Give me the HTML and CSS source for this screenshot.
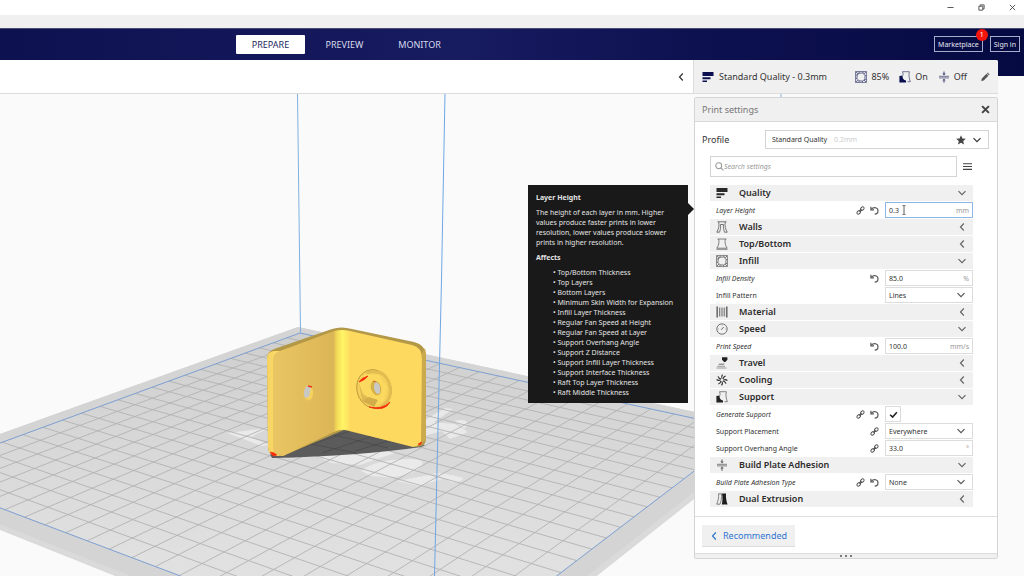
FILE: index.html
```html
<!DOCTYPE html>
<html lang="en">
<head>
<meta charset="utf-8">
<title>Print preparation</title>
<link rel="stylesheet" href="styles.css">
</head>
<body>
<svg class="symbols" aria-hidden="true">
  <symbol id="i-down" viewBox="0 0 10 10"><path d="M1.5 3.2 5 6.7 8.5 3.2" fill="none" stroke="currentColor" stroke-width="1.2"/></symbol>
  <symbol id="i-left" viewBox="0 0 10 10"><path d="M6.8 1.5 3.5 5 6.8 8.5" fill="none" stroke="currentColor" stroke-width="1.2"/></symbol>
  <symbol id="i-link" viewBox="0 0 10 10"><g fill="none" stroke="currentColor" stroke-width="1.1"><ellipse cx="3" cy="7" rx="2.3" ry="1.6" transform="rotate(-45 3 7)"/><ellipse cx="7" cy="3" rx="2.3" ry="1.6" transform="rotate(-45 7 3)"/><path d="M3.6 6.4 6.4 3.6"/></g></symbol>
  <symbol id="i-undo" viewBox="0 0 10 10"><path d="M1.500 3.600C4 .6 8.900 1.500 8.900 5.300 8.900 7.600 7.300 9 5.200 9" fill="none" stroke="currentColor" stroke-width="1.300"/><path d="M1 .9V4.300H4.400" fill="none" stroke="currentColor" stroke-width="1.300"/></symbol>
  <symbol id="i-quality" viewBox="0 0 12 12"><path d="M.5 1h11v4H.5zM.5 6.2h8v2H.5zM.5 9.6h4.5v1.3H.5z" fill="currentColor"/></symbol>
  <symbol id="i-walls" viewBox="0 0 12 12"><path d="M1.500.800h9M2.700.800C3.500 5 2.500 8 .800 11.200h2.700C4.500 8.500 4.800 6 4.500 3.500h3C7.200 6 7.500 8.500 8.500 11.200h2.700C9.500 8 8.500 5 9.300.800" fill="none" stroke="currentColor" stroke-width=".9"/></symbol>
  <symbol id="i-top" viewBox="0 0 12 12"><path d="M1.500 1h9M2.700 1c.8 4-.2 6.500-1.900 9.200h10.400C9.500 7.500 8.500 5 9.300 1M.5 11.300h11" fill="none" stroke="currentColor" stroke-width=".8"/></symbol>
  <symbol id="i-infill" viewBox="0 0 12 12"><g fill="none" stroke="currentColor" stroke-width=".8"><path d="M.6.6h10.800v10.800H.6z"/><path d="M4 2.200 8 2l2 2.500-.2 4L7.500 10 4 9.800 2 7.500 2.200 4zM.6 4H2.200L4 2.200V.6M8 .6V2M11.400 4.500H10M9.800 8.500h1.600M7.500 10v1.400M4 9.800v1.600M2 7.500H.6M.6.6 3 3M11.400.6 9 3M.6 11.400 3 9M11.400 11.400 9 9"/></g></symbol>
  <symbol id="i-material" viewBox="0 0 12 12"><path d="M1.200.5v11M10.800.5v11" stroke="currentColor" stroke-width="1.500"/><path d="M3.500 1.500v9M5.200 1.500v9M6.900 1.500v9M8.600 1.500v9" stroke="currentColor" stroke-width=".8"/></symbol>
  <symbol id="i-speed" viewBox="0 0 12 12"><circle cx="6" cy="6" r="5.200" fill="none" stroke="currentColor" stroke-width=".9"/><path d="M5.200 6.800 7.800 4" stroke="currentColor"/><path d="M6 1.800v.8M1.900 6h.8M9.300 6h.8" stroke="currentColor" stroke-width=".6"/></symbol>
  <symbol id="i-travel" viewBox="0 0 12 12"><path d="M6 .3h5.400v2.500L9.300 5H8.100L6 2.800z" fill="#222"/><path d="M3 6.500h6L7.500 8H2.500zM1.500 8.700h7.500v1H1zM.5 10.500h10v1H.5z" fill="#999"/></symbol>
  <symbol id="i-cooling" viewBox="0 0 12 12"><g fill="none" stroke="currentColor" stroke-width="1.100"><path d="M6 4.600Q5 2.500 6.500.6M7 5Q7.300 2.800 9.600 2M7.400 6Q9.500 5 11.400 6.500M7 7Q9.200 7.300 10 9.600M6 7.400Q7 9.500 5.500 11.400M5 7Q4.700 9.200 2.400 10M4.600 6Q2.500 7 .6 5.500M5 5Q2.800 4.700 2 2.400"/></g></symbol>
  <symbol id="i-support" viewBox="0 0 12 12"><path d="M.4 5 3.500 4.500C3.500 7.500 4.500 9 7 9.500v2.100H.4z" fill="var(--solid, #222)"/><path d="M3.500.7h6.800c-.7 3.300-.2 6.500 1 10H8.500M3.500.7c.8 2 .6 3 .3 4" fill="none" stroke="currentColor" stroke-width=".8"/></symbol>
  <symbol id="i-adhesion" viewBox="0 0 12 12"><path d="M1 5.300h10M1 6.900h10" stroke="currentColor" stroke-width=".8"/><path d="M6 .5v3M6 8.700v3" stroke="currentColor" stroke-width="1.100"/><path d="M4.300 2.600h3.400L6 4.600zM4.300 9.600h3.400L6 7.600z" fill="currentColor"/></symbol>
  <symbol id="i-dual" viewBox="0 0 12 12"><path d="M5.500.8H2.600C3 4.500 2 8 .8 11.200h3.200C5.300 8 5.700 4.500 5.500.8z" fill="none" stroke="currentColor" stroke-width=".8"/><path d="M6 .5h4C9.700 5 10.500 8.500 11.600 11.600H5.800C6.700 8 6.700 4 6 .5z" fill="#1c1c1c"/></symbol>
</svg>

<div class="app">
  <svg class="scene" viewBox="0 0 1024 576" preserveAspectRatio="xMinYMin slice" role="img" aria-label="Yellow bracket on the build plate">
    <defs>
      <linearGradient id="bed" x1="0" y1="0" x2="0" y2="1"><stop offset="0" stop-color="#cfcfcf"/><stop offset=".65" stop-color="#e0e0e0"/><stop offset="1" stop-color="#e4e4e4"/></linearGradient>
      <linearGradient id="leftface" x1="0" x2="1"><stop offset="0" stop-color="#eac563"/><stop offset="1" stop-color="#dcb656"/></linearGradient>
      <linearGradient id="bend" x1="0" x2="1"><stop offset="0" stop-color="#e3bf52"/><stop offset=".2" stop-color="#f3dc59"/><stop offset=".55" stop-color="#fff565"/><stop offset="1" stop-color="#ffdc60"/></linearGradient>
      <linearGradient id="leftedge" x1="0" x2="1"><stop offset="0" stop-color="#f5d263"/><stop offset="1" stop-color="#ffe06a"/></linearGradient>
    </defs>
    <path d="M298 327 L-120 477 V482 L435 704 L770 439 V428z" fill="#dadada"/>
    <path d="M298 327 L-120 477 L435 696 L770 432 V428z" fill="#d4d4d4"/>
    <path d="M300 333 L-87 475 L432 671 L748 430z" fill="url(#bed)"/>
    <g fill="#f0f0f0" opacity=".75">
      <path d="M227 433l42-5-18 9 18 8-7 1z"/>
      <path d="M318 457l62-7 18 2-38 13-28-2z"/>
      <path d="M361 471q14-12 50-12 20 1 6 11-16 10-46 6z"/>
      <path d="M397 481l32-6 14 4-24 7z"/>
      <path d="M425 420l20-12 8 1-19 13 21 2 13 8-18 7-8-8-18 5z"/>
      <path d="M455 421q12-3 13 4l-4 4M432 473q14 0 31 5-1 5-12 4z"/>
    </g>
    <g id="grid" stroke="#b2b2b2" stroke-width=".9"></g>
    <path d="M300 333 L-87 475 L432 671 L748 430z" fill="none" stroke="#7d9fd2"/>
    <path d="M297.500 93 L300.500 333M781 93v5" stroke="#80afdf" fill="none"/>
    <path d="M270 454 344 428 425 445 421 447 Q360 456 272 458z" fill="#5b5b5b"/>
    <g stroke="#484848" stroke-width=".7"><path d="M290 452l66-23M322 453l54-18M355 451l43-13M306 443l50 10M330 434l58 14"/></g>
    <path d="M267 358Q267 352 274 349L332 329Q341 326 352 329L414 342Q426 345 426 357V440Q425 447 416 447L344 430 283 456Q268 457 268 447z" fill="#b39847"/>
    <path d="M267 358Q267 352 274 351L281 351 279 456Q268 456 268 447z" fill="url(#leftedge)"/>
    <path d="M273 360Q273 353 280 351L334 331V432L283 456Q273 456 273 448z" fill="url(#leftface)"/>
    <path d="M334 331Q342 329 350 331V431Q342 428 334 432z" fill="url(#bend)"/>
    <path d="M350 331L412 345Q422 347 422 359V437Q421 446 413 447L350 431z" fill="#fdd95f"/>
    <path d="M422 353l3-5q1 4 1 9v83l-5 4z" fill="#cba94d"/>
    <ellipse cx="308" cy="393" rx="5" ry="8" fill="#e8c25a"/>
    <ellipse cx="309" cy="393" rx="4" ry="7" fill="#f5d35e"/>
    <path d="M304 391q2-6 5-5l2 1-2 10-4 1q-2-3-1-7z" fill="#c8c8c4"/>
    <path d="M308 386l4 1" stroke="#f03512" stroke-width="1.500"/>
    <ellipse cx="374" cy="389" rx="17" ry="19.500" transform="rotate(-18 374 389)" fill="#f5d15b" stroke="#b18e38" stroke-width=".8"/>
    <path d="M366 373q18-5 23 10t-8 24" fill="none" stroke="#e2bd51" stroke-width="3"/>
    <path d="M359 383l7-9 13 1 8 12-3 14-9 5-13-6z" fill="#fbd95f"/>
    <path d="M359 383l4 11 6 4-7 3z" fill="#dfba51"/><path d="M362 401l7-4 9 3-4 7z" fill="#d2ad49"/>
    <ellipse cx="376" cy="388" rx="5" ry="7.500" transform="rotate(-18 376 388)" fill="#d5b047"/>
    <path d="M375 382q6 0 5 11l-3 1q-5-5-2-12z" fill="#c9c9c8"/>
    <path d="M359 382q2-4 9-6-3 4-9 6zM369 407q13 3 21-5-5 10-21 5z" fill="#f52a0b" stroke="#f52a0b" stroke-width=".8"/>
    <path d="M373 381l3 1M270 452q4 0 7 3l-4 1zM418 444l4-2-2 3z" fill="#f52a0b" stroke="#f52a0b" stroke-width=".6"/>
    <path d="M445 93 L441.500 280 L434.500 576" stroke="#6fa7e3" fill="none"/>
  </svg>

  <div class="titlebar">
    <button class="win" aria-label="Minimize"><svg viewBox="0 0 8 8"><path d="M.5 4h7" stroke="#444"/></svg></button>
    <button class="win" aria-label="Restore"><svg viewBox="0 0 8 8"><path d="M1 2.500h4.500V7H1zM2.500 2.500V1H7v4.500H5.500" fill="none" stroke="#444"/></svg></button>
    <button class="win" aria-label="Close"><svg viewBox="0 0 8 8"><path d="M1 1l6 6M7 1 1 7" stroke="#444"/></svg></button>
  </div>
  <div class="menubar"></div>

  <header class="header">
    <nav class="stages">
      <a class="stage stage-on" href="#prepare">PREPARE</a>
      <a class="stage" href="#preview">PREVIEW</a>
      <a class="stage" href="#monitor">MONITOR</a>
    </nav>
    <div class="account">
      <button class="outline">Marketplace<span class="badge">1</span></button>
      <button class="outline">Sign in</button>
    </div>
  </header>

  <div class="toolbar">
    <div class="toolbar-left"><button class="plain" aria-label="Collapse"><svg class="ico10"><use href="#i-left"/></svg></button></div>
    <div class="summary">
      <svg class="ico12 navy"><use href="#i-quality"/></svg>
      <span class="summary-name">Standard Quality - 0.3mm</span>
      <span class="stat"><svg class="ico12"><use href="#i-infill"/></svg>85%</span>
      <span class="stat"><svg class="ico12"><use href="#i-support"/></svg>On</span>
      <span class="stat"><svg class="ico12"><use href="#i-adhesion"/></svg>Off</span>
      <button class="plain" aria-label="Edit"><svg class="ico10" viewBox="0 0 10 10"><path d="M1.200 9l.6-2.500L6.500 1.800l1.900 1.900L3.700 8.400zM7 1.300l.8-.7 1.800 1.800-.8.8z" fill="#555"/></svg></button>
    </div>
  </div>

  <section class="panel">
    <aside class="tooltip">
      <h3>Layer Height</h3>
      <p>The height of each layer in mm. Higher values produce faster prints in lower resolution, lower values produce slower prints in higher resolution.</p>
      <h3>Affects</h3>
      <ul>
        <li>Top/Bottom Thickness</li><li>Top Layers</li><li>Bottom Layers</li><li>Minimum Skin Width for Expansion</li><li>Infill Layer Thickness</li><li>Regular Fan Speed at Height</li><li>Regular Fan Speed at Layer</li><li>Support Overhang Angle</li><li>Support Z Distance</li><li>Support Infill Layer Thickness</li><li>Support Interface Thickness</li><li>Raft Top Layer Thickness</li><li>Raft Middle Thickness</li>
      </ul>
    </aside>
    <div class="panel-head">
      <h2>Print settings</h2>
      <button class="plain" aria-label="Close settings"><svg class="ico8" viewBox="0 0 8 8"><path d="M1 1l6 6M7 1 1 7" stroke="#444" stroke-width="1.800"/></svg></button>
    </div>
    <div class="profile">
      <label for="profile">Profile</label>
      <div class="profile-box">
        <select id="profile"><option>Standard Quality</option></select>
        <span class="hint">0.2mm</span>
        <svg class="ico10" viewBox="0 0 10 10"><path d="M5 .3 6.400 3.500 9.900 3.800 7.200 6.100 8 9.600 5 7.700 2 9.600 2.800 6.100.1 3.800 3.600 3.500z" fill="#444"/></svg>
        <svg class="ico10"><use href="#i-down"/></svg>
      </div>
    </div>
    <div class="search">
      <div class="search-box">
        <svg class="ico8" viewBox="0 0 8 8"><circle cx="3.300" cy="3.300" r="2.600" fill="none" stroke="#999" stroke-width=".9"/><path d="M5.200 5.200 7.500 7.500" stroke="#999"/></svg>
        <input type="text" placeholder="Search settings" aria-label="Search settings">
      </div>
      <button class="plain" aria-label="Setting visibility"><svg class="ico8" viewBox="0 0 8 8"><path d="M0 1.500h8M0 4h8M0 6.500h8" stroke="#444"/></svg></button>
    </div>

    <div class="list">
      <button class="cat"><svg class="ico12 dark"><use href="#i-quality"/></svg><span>Quality</span><svg class="ico10"><use href="#i-down"/></svg></button>
      <div class="row"><label class="changed" for="lh">Layer Height</label><svg class="ico8"><use href="#i-link"/></svg><svg class="ico8"><use href="#i-undo"/></svg><div class="field focus"><input id="lh" type="text" value="0.3"><span>mm</span><svg class="ibeam" viewBox="0 0 4 10"><path d="M.5.500h1l.5.500.5-.5h1M2 1v8M.5 9.500h1L2 9l.5.500h1" fill="none" stroke="#333" stroke-width=".8"/></svg></div></div>
      <button class="cat"><svg class="ico12"><use href="#i-walls"/></svg><span>Walls</span><svg class="ico10"><use href="#i-left"/></svg></button>
      <button class="cat"><svg class="ico12"><use href="#i-top"/></svg><span>Top/Bottom</span><svg class="ico10"><use href="#i-left"/></svg></button>
      <button class="cat"><svg class="ico12"><use href="#i-infill"/></svg><span>Infill</span><svg class="ico10"><use href="#i-down"/></svg></button>
      <div class="row"><label class="changed" for="dens">Infill Density</label><svg class="ico8"><use href="#i-undo"/></svg><div class="field"><input id="dens" type="text" value="85.0"><span>%</span></div></div>
      <div class="row"><label for="pat">Infill Pattern</label><div class="field"><select id="pat"><option>Lines</option></select><svg class="ico10"><use href="#i-down"/></svg></div></div>
      <button class="cat"><svg class="ico12"><use href="#i-material"/></svg><span>Material</span><svg class="ico10"><use href="#i-left"/></svg></button>
      <button class="cat"><svg class="ico12"><use href="#i-speed"/></svg><span>Speed</span><svg class="ico10"><use href="#i-down"/></svg></button>
      <div class="row"><label class="changed" for="spd">Print Speed</label><svg class="ico8"><use href="#i-undo"/></svg><div class="field"><input id="spd" type="text" value="100.0"><span>mm/s</span></div></div>
      <button class="cat"><svg class="ico12"><use href="#i-travel"/></svg><span>Travel</span><svg class="ico10"><use href="#i-left"/></svg></button>
      <button class="cat"><svg class="ico12 dark"><use href="#i-cooling"/></svg><span>Cooling</span><svg class="ico10"><use href="#i-left"/></svg></button>
      <button class="cat"><svg class="ico12"><use href="#i-support"/></svg><span>Support</span><svg class="ico10"><use href="#i-down"/></svg></button>
      <div class="row"><label class="changed" for="gen">Generate Support</label><svg class="ico8"><use href="#i-link"/></svg><svg class="ico8"><use href="#i-undo"/></svg><div class="check"><input id="gen" type="checkbox" checked><svg class="ico8 tick" viewBox="0 0 8 8"><path d="M1 4.200 3.200 6.300 7 2" fill="none" stroke="#222" stroke-width="1.400"/></svg></div></div>
      <div class="row"><label for="place">Support Placement</label><svg class="ico8"><use href="#i-link"/></svg><div class="field"><select id="place"><option>Everywhere</option></select><svg class="ico10"><use href="#i-down"/></svg></div></div>
      <div class="row"><label for="ang">Support Overhang Angle</label><svg class="ico8"><use href="#i-link"/></svg><div class="field"><input id="ang" type="text" value="33.0"><span>°</span></div></div>
      <button class="cat"><svg class="ico12"><use href="#i-adhesion"/></svg><span>Build Plate Adhesion</span><svg class="ico10"><use href="#i-down"/></svg></button>
      <div class="row"><label class="changed" for="adh">Build Plate Adhesion Type</label><svg class="ico8"><use href="#i-link"/></svg><svg class="ico8"><use href="#i-undo"/></svg><div class="field"><select id="adh"><option>None</option></select><svg class="ico10"><use href="#i-down"/></svg></div></div>
      <button class="cat"><svg class="ico12"><use href="#i-dual"/></svg><span>Dual Extrusion</span><svg class="ico10"><use href="#i-left"/></svg></button>
    </div>

    <div class="panel-foot"><button class="recommended"><svg class="ico10"><use href="#i-left"/></svg>Recommended</button></div>
    <div class="grip"><i></i><i></i><i></i></div>
  </section>
</div>
<script src="grid.js"></script>
</body>
</html>
```

FILE: styles.css
```css
* { box-sizing: border-box; }
body { margin: 0; font-family: "Noto Sans", sans-serif; font-size: 7px; color: #333; background: #fafafa; }
button, input, select { font: inherit; color: inherit; margin: 0; padding: 0; border: 0; background: none; border-radius: 0; appearance: none; outline: 0; }
h2, h3, p, ul { margin: 0; padding: 0; }
svg { display: block; flex: none; }
.symbols { position: absolute; width: 0; height: 0; }
.app { position: relative; min-height: 100vh; overflow: hidden; display: flex; flex-direction: column; }
.scene { position: absolute; inset: 0; width: 100%; height: 100%; z-index: -1; }
.ico8 { width: 9px; height: 9px; }
.ico10 { width: 10px; height: 10px; }
.ico12 { width: 12px; height: 12px; }
.plain { display: flex; }

.titlebar { height: 15px; background: #fff; display: flex; justify-content: flex-end; align-items: center; gap: 24px; padding-right: 8px; }
.win svg { width: 7px; height: 7px; }
.menubar { height: 13px; background: #f0f0f0; }

.header { height: 48px; display: flex; align-items: flex-start; justify-content: space-between; padding: 6px 4px 0 236px; border-top: 1px solid #4a4d70; background: linear-gradient(90deg, #0e1150, #171b60 45%, #0e1150 68%, #060a42); color: #e6e7f2; }
.stages { display: flex; gap: 4px; font-size: 9px; }
.stage { width: 71px; height: 19px; line-height: 19px; text-align: center; color: #d8daec; text-decoration: none; border-radius: 1px; }
.stage-on { width: 69px; background: #fff; color: #1b1f5c; }
.account { display: flex; gap: 7px; padding-top: 1px; }
.outline { position: relative; height: 16px; padding: 0 3px; border: 1px solid #a9abca; font-size: 7px; white-space: nowrap; }
.badge { position: absolute; top: -8px; right: -6px; width: 12px; height: 12px; line-height: 12px; border-radius: 50%; background: #f3150c; color: #fff; text-align: center; }

.toolbar { height: 34px; margin: -16px 26px 0 0; display: flex; border-bottom: 1px solid #dcdcdc; background: #fff; border-top-right-radius: 2px; }
.toolbar-left { flex: 1; display: flex; align-items: center; justify-content: flex-end; padding-right: 7px; border-right: 1px solid #dcdcdc; color: #333; }
.summary { width: 304px; display: flex; align-items: center; padding: 0 8px; background: #f0f0f0; font-size: 9px; border-top-right-radius: 2px; }
.summary-name { flex: 1; padding-left: 5px; }
.navy { color: #0b0f4f; }
.stat { display: flex; align-items: center; gap: 4px; margin-right: 10px; }
.stat:last-of-type { margin-right: 13px; }
.stat svg { color: #50547f; --solid: #0b0f4f; }

.panel { position: relative; align-self: flex-end; width: 304px; margin: 3px 26px 0 0; background: #fff; border: 1px solid #d4d4d4; border-radius: 2px; }
.panel-head { height: 24px; display: flex; align-items: center; justify-content: space-between; padding: 0 7px; background: #f0f0f0; border-bottom: 1px solid #d8d8d8; }
.panel-head h2 { font-size: 9px; font-weight: 400; color: #777; }
.profile { display: flex; align-items: center; justify-content: space-between; padding: 8px 8px 0 7px; font-size: 9px; }
.profile-box { width: 224px; height: 19px; display: flex; align-items: center; gap: 6px; padding: 0 6px; border: 1px solid #d4d4d4; font-size: 7px; color: #333; }
.hint { flex: 1; color: #ccc; }
.search { display: flex; align-items: center; gap: 6px; padding: 7px 25px 0 15px; }
.search-box { flex: 1; height: 21px; display: flex; align-items: center; padding: 0 4px; border: 1px solid #d4d4d4; }
.search-box input { flex: 1; font-style: italic; }
.search-box input::placeholder { color: #999; opacity: 1; }

.list { display: grid; gap: 1px; padding: 8px 24px 9px 15px; }
.cat { height: 16px; display: flex; align-items: center; padding: 0 6px; background: #f0f0f0; color: #666; text-align: left; font-size: 9px; font-weight: 600; }
.cat span { flex: 1; padding-left: 11px; line-height: 16px; color: #2c2c2c; }
.cat .dark { color: #2a2a2a; }
.row { height: 16px; display: flex; align-items: center; gap: 5px; padding-left: 6px; color: #555; }
.row label { flex: 1; color: #333; white-space: nowrap; }
.changed { font-style: italic; }
.field { position: relative; width: 88px; height: 16px; margin-left: 1px; display: flex; align-items: center; padding: 0 6px 0 3px; border: 1px solid #dcdcdc; }
.field span { margin-right: -3px; color: #999; }
.field input, .field select { flex: 1; width: 40px; min-width: 0; color: #333; }
.focus { border-color: #8db7e8; }
.ibeam { position: absolute; left: 16px; top: 2px; width: 4px; height: 10px; }
.check { position: relative; width: 88px; margin-left: 1px; display: flex; }
.check input { width: 16px; height: 16px; border: 1px solid #dcdcdc; background: #fff; }
.tick { position: absolute; left: 4px; top: 4px; pointer-events: none; }

.panel-foot { padding: 8px 7px 6px; border-top: 1px solid #e0e0e0; }
.recommended { height: 22px; display: flex; align-items: center; gap: 4px; padding: 0 8px 0 7px; background: #f0f0f0; border-bottom: 1px solid #dcdcdc; color: #2f74d0; font-size: 9px; }
.grip { height: 5px; display: flex; justify-content: center; align-items: center; gap: 3px; background: #f0f0f0; border-top: 1px solid #dcdcdc; }
.grip i { width: 2px; height: 2px; border-radius: 50%; background: #555; }

.tooltip { position: absolute; right: 100%; top: 87px; width: 160px; margin-right: 7px; padding: 8px 8px 5px; background: #191919; color: #e4e4e4; line-height: 10px; }
.tooltip::after { content: ""; position: absolute; left: 100%; top: 18px; border: 6px solid transparent; border-left-color: #191919; border-right: 0; }
.tooltip h3 { font-size: 7px; line-height: 10px; font-weight: 700; margin-bottom: 5px; }
.tooltip p { margin-bottom: 5px; }
.tooltip ul { list-style: none; padding-left: 17px; white-space: nowrap; }
.tooltip li::before { content: "• "; }
```

FILE: grid.js
```js
// Draws the build plate grid: 22 x 22 cells seen in perspective.
(function () {
  var cells = 22;
  var back = [300, 333], left = [-87, 475], front = [432, 671], right = [748, 430];
  var ax = left[0] - front[0], ay = left[1] - front[1];
  var bx = right[0] - front[0], by = right[1] - front[1];
  var sx = back[0] - left[0] + front[0] - right[0];
  var sy = back[1] - left[1] + front[1] - right[1];
  var det = ax * by - bx * ay;
  var g = (sx * by - bx * sy) / det;
  var h = (ax * sy - sx * ay) / det;

  function project(u, v) {
    var w = 1 + g * u + h * v;
    return [0, 1].map(function (i) {
      return ((back[i] + (left[i] - back[i] + g * left[i]) * u + (right[i] - back[i] + h * right[i]) * v) / w).toFixed(2);
    });
  }

  function line(a, b) {
    var el = document.createElementNS("http://www.w3.org/2000/svg", "path");
    el.setAttribute("d", "M" + a.join(" ") + "L" + b.join(" "));
    document.getElementById("grid").appendChild(el);
  }

  for (var k = 1; k < cells; k++) {
    line(project(k / cells, 0), project(k / cells, 1));
    line(project(0, k / cells), project(1, k / cells));
  }
})();
```
